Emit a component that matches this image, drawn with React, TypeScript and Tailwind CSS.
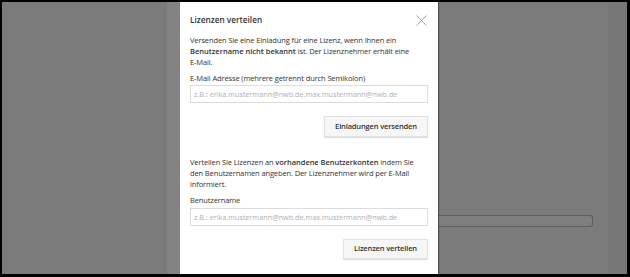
import React from "react";

export default function App() {
  const font = { fontFamily: '"Open Sans", "Liberation Sans", sans-serif' };
  return (
    <div className="w-[630px] h-[277px] bg-black pt-[2px] pl-[2px] pr-[3px] pb-[3px]" style={font}>
      <div className="flex h-[272px] w-[625px]">
        <div className="w-[165px] bg-[#7b7b7b]" />
        <div className="w-[13px] bg-[#838383]" />
        <div className="relative w-[258px] bg-white px-[10px] pt-[11px] text-[#333] shadow-[1px_0_1px_rgba(0,0,0,0.35)] z-10">
          <div className="flex items-center justify-between h-[14px]">
            <span className="text-[8.25px] font-semibold">Lizenzen verteilen</span>
            <svg width="11" height="11" viewBox="0 0 11 11" className="mr-[1px]">
              <path d="M0.5 0.5 L10.5 10.5 M10.5 0.5 L0.5 10.5" stroke="#9a9a9a" strokeWidth="0.9" fill="none" />
            </svg>
          </div>
          <p className="mt-[8px] text-[7.5px] leading-[11px] tracking-[-0.12px] whitespace-nowrap">
            Versenden Sie eine Einladung für eine Lizenz, wenn Ihnen ein
            <br />
            <b className="font-semibold tracking-[0px]">Benutzername nicht bekannt</b> ist. Der Lizenznehmer erhält eine
            <br />
            E-Mail.
          </p>
          <div className="mt-[5px] text-[7.5px] leading-[11px] tracking-[-0.12px] whitespace-nowrap">
            E-Mail Adresse (mehrere getrennt durch Semikolon)
          </div>
          <div className="mt-[1px] h-[18px] border border-[#dcdcdc] flex items-center pl-[3px] text-[7.25px] text-[#b0b0b0] whitespace-nowrap">
            z.B.: erika.mustermann@nwb.de,max.mustermann@nwb.de
          </div>
          <div className="flex justify-end mt-[13px]">
            <div className="w-[104px] h-[21px] bg-[#f6f6f6] border border-[#e2e2e2] shadow-[0_1px_1px_rgba(0,0,0,0.12)] flex items-center justify-center text-[7.5px] font-semibold tracking-[-0.15px] whitespace-nowrap">
              Einladungen versenden
            </div>
          </div>
          <p className="mt-[20px] text-[7.5px] leading-[11px] tracking-[-0.12px] whitespace-nowrap">
            Verteilen Sie Lizenzen an <b className="font-semibold tracking-[-0.05px]">vorhandene Benutzerkonten</b> indem Sie
            <br />
            den Benutzernamen angeben. Der Lizenznehmer wird per E-Mail
            <br />
            informiert.
          </p>
          <div className="mt-[5px] text-[7.5px] leading-[11px] tracking-[-0.12px]">Benutzername</div>
          <div className="mt-[2px] h-[18px] border border-[#dcdcdc] flex items-center pl-[3px] text-[7.25px] text-[#b0b0b0] whitespace-nowrap">
            z.B.: erika.mustermann@nwb.de,max.mustermann@nwb.de
          </div>
          <div className="flex justify-end mt-[13px]">
            <div className="w-[85px] h-[20px] bg-[#f6f6f6] border border-[#e2e2e2] shadow-[0_1px_1px_rgba(0,0,0,0.12)] flex items-center justify-center text-[7.5px] font-semibold tracking-[-0.15px] whitespace-nowrap">
              Lizenzen verteilen
            </div>
          </div>
        </div>
        <div className="w-[170px] bg-[#7b7b7b] pt-[213px]">
          <div className="h-[12px] w-[155px] border border-l-0 border-[#5e5e5e] rounded-r-[3px] bg-[#7e7e7e]" />
        </div>
        <div className="w-[19px] bg-[#777777]" />
      </div>
    </div>
  );
}
